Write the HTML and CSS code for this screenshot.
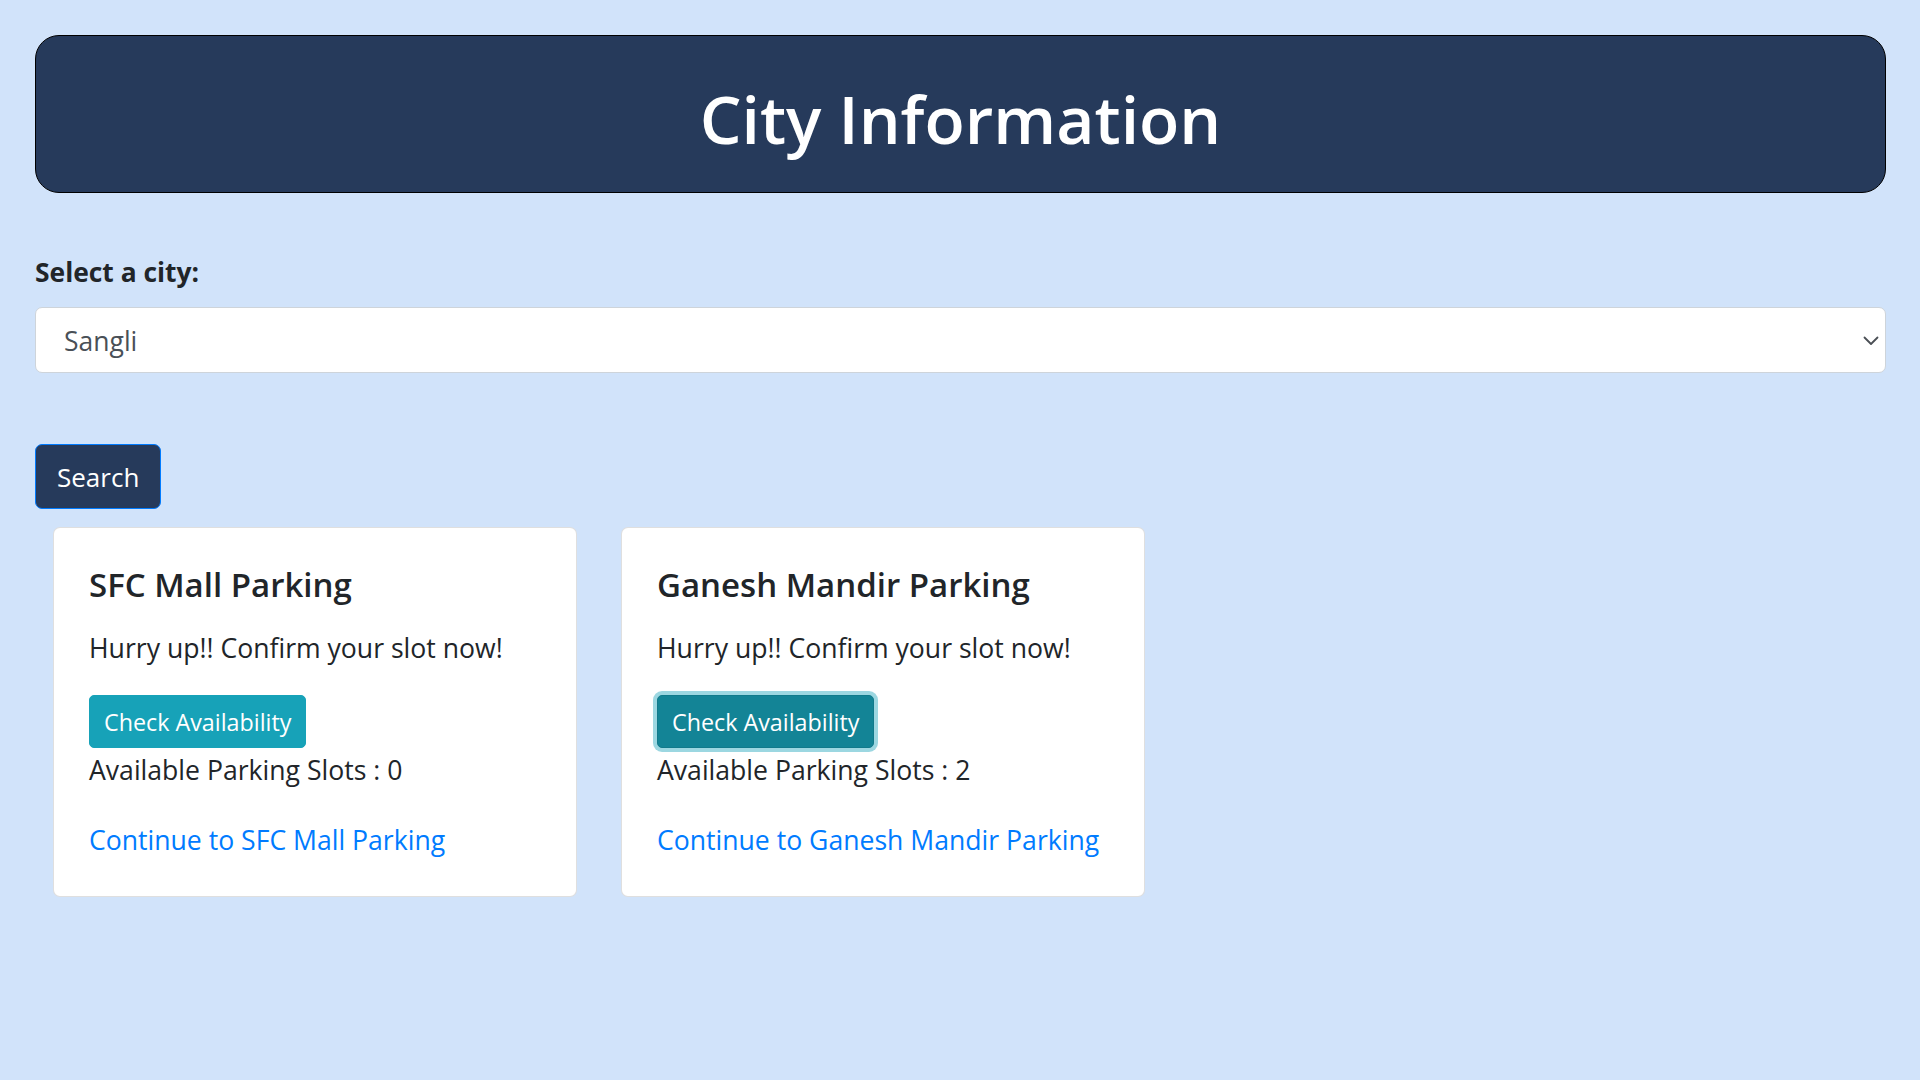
FILE: index.html
```html
<!DOCTYPE html>
<html lang="en">
<head>
<meta charset="utf-8">
<title>City Information</title>
<link rel="stylesheet" href="styles.css">
</head>
<body>
<div class="page">
  <header class="header">
    <h1 class="header-title">City Information</h1>
  </header>

  <label class="city-label" for="city">Select a city:</label>
  <div class="select-wrap">
    <select id="city" class="city-select">
      <option>Sangli</option>
    </select>
    <svg class="select-chevron" width="16" height="10" viewBox="0 0 16 10" aria-hidden="true">
      <path d="M1.5 1.5 L8 8 L14.5 1.5" fill="none" stroke="#4a4f55" stroke-width="1.8" stroke-linecap="round" stroke-linejoin="round"/>
    </svg>
  </div>

  <button class="search-btn" type="button">Search</button>

  <div class="cards">
    <div class="card">
      <h5 class="card-title">SFC Mall Parking</h5>
      <p class="card-text">Hurry up!! Confirm your slot now!</p>
      <button class="check-btn" type="button">Check Availability</button>
      <div class="slots">Available Parking Slots : 0</div>
      <a class="card-link" href="#">Continue to SFC Mall Parking</a>
    </div>
    <div class="card">
      <h5 class="card-title">Ganesh Mandir Parking</h5>
      <p class="card-text">Hurry up!! Confirm your slot now!</p>
      <button class="check-btn check-btn-focus" type="button">Check Availability</button>
      <div class="slots">Available Parking Slots : 2</div>
      <a class="card-link" href="#">Continue to Ganesh Mandir Parking</a>
    </div>
  </div>
</div>
</body>
</html>
```

FILE: styles.css
```css
* {
  box-sizing: border-box;
}

html, body {
  margin: 0;
  padding: 0;
}

body {
  background: #d1e3fa;
  font-family: "Open Sans", "Noto Sans", "Liberation Sans", sans-serif;
  color: #212529;
  min-height: 1080px;
}

.page {
  padding: 35px 34px 0 35px;
}

.header {
  background: #263a5b;
  border: 1px solid #000;
  border-radius: 24px;
  text-align: center;
}

.header-title {
  margin: 0;
  padding: 40px 0 32px;
  font-size: 66px;
  line-height: 84px;
  font-weight: 600;
  color: #ffffff;
}

.city-label {
  display: block;
  margin-top: 58px;
  margin-bottom: 14px;
  font-size: 26.4px;
  line-height: 42px;
  font-weight: 700;
}

.select-wrap {
  position: relative;
}

.city-select {
  display: block;
  width: 100%;
  height: 66px;
  padding: 2px 40px 0 28px;
  font-family: inherit;
  font-size: 26.5px;
  color: #495057;
  background: #ffffff;
  border: 1px solid #ced4da;
  border-radius: 7px;
  appearance: none;
  -webkit-appearance: none;
  outline: none;
}

.select-chevron {
  position: absolute;
  right: 7px;
  top: 29px;
  pointer-events: none;
}

.search-btn {
  display: block;
  margin-top: 71px;
  height: 65px;
  padding: 0 21px;
  font-family: inherit;
  font-size: 26px;
  color: #ffffff;
  background: #263a5b;
  border: 1px solid #007bff;
  border-radius: 7px;
}

.cards {
  display: flex;
  gap: 44px;
  margin-top: 18px;
  padding-left: 18px;
}

.card {
  width: 524px;
  background: #ffffff;
  border: 1px solid rgba(0, 0, 0, 0.125);
  border-radius: 7px;
  padding: 36px 35px 35px;
}

.card-title {
  margin: 0 0 21px;
  font-size: 33px;
  line-height: 42px;
  font-weight: 600;
}

.card-text {
  margin: 0 0 26px;
  font-size: 26.6px;
  line-height: 42px;
}

.check-btn {
  display: block;
  height: 53px;
  padding: 0 14px;
  font-family: inherit;
  font-size: 23.3px;
  color: #ffffff;
  background: #17a2b8;
  border: 1px solid #17a2b8;
  border-radius: 5px;
}

.check-btn-focus {
  background: #138496;
  border-color: #117a8b;
  box-shadow: 0 0 0 4px rgba(58, 176, 195, 0.5);
}

.slots {
  margin-top: 1px;
  font-size: 26.6px;
  line-height: 42px;
}

.card-link {
  display: block;
  margin-top: 28px;
  font-size: 26.6px;
  line-height: 42px;
  color: #007bff;
  text-decoration: none;
}
```
